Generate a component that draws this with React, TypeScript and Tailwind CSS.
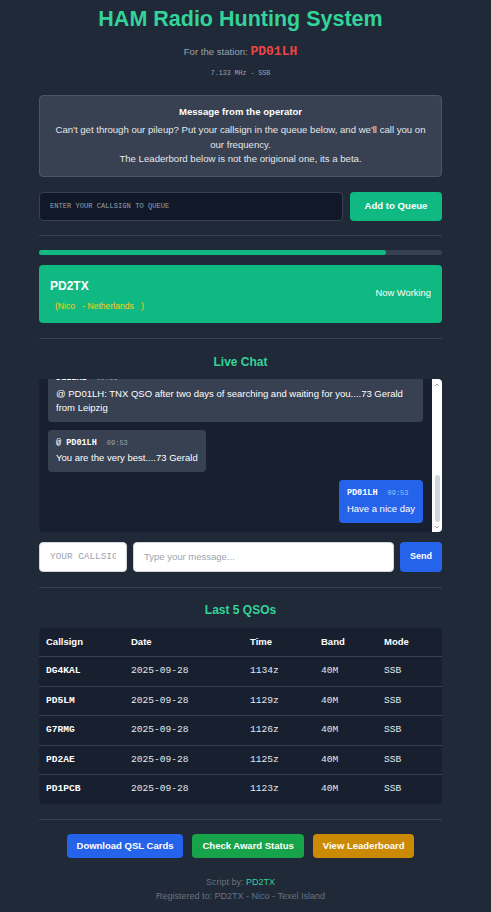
import React, { useLayoutEffect, useRef } from "react";

const SANS = "[font-family:'Liberation_Sans',Arial,sans-serif]";
const MONO = "[font-family:'Liberation_Mono','DejaVu_Sans_Mono',monospace]";

type Msg = { from: string; time: string; text: string; mine?: boolean };

const messages: Msg[] = [
  { from: "PD2TX", time: "09:42", text: "Good morning all, 40M is open nicely today." },
  { from: "DL1LRL", time: "09:45", text: "Hello from Leipzig, listening on 7.133" },
  { from: "PD01LH", time: "09:47", text: "QRV now, please add your call to the queue." },
  { from: "DL1LRL", time: "09:51", text: "@ PD01LH: TNX QSO after two days of searching and waiting for you....73 Gerald from Leipzig" },
  { from: "@ PD01LH", time: "09:53", text: "You are the very best....73 Gerald" },
  { from: "PD01LH", time: "09:53", text: "Have a nice day", mine: true },
];

const qsos = [
  { call: "DG4KAL", time: "1134z" },
  { call: "PD5LM", time: "1129z" },
  { call: "G7RMG", time: "1126z" },
  { call: "PD2AE", time: "1125z" },
  { call: "PD1PCB", time: "1123z" },
];

function Divider() {
  return <div className="h-px bg-[#374151]" />;
}

export default function App() {
  const chatRef = useRef<HTMLDivElement>(null);
  useLayoutEffect(() => {
    const el = chatRef.current;
    if (el) el.scrollTop = el.scrollHeight;
  }, []);

  return (
    <div className={`min-h-screen bg-[#1f2937] text-white ${SANS}`}>
      <div className="pl-[39px] pr-[49px] pt-[5px] pb-[10px]">
        <h1 className="text-center text-[21.5px] leading-[28px] font-bold text-[#34d399]">
          HAM Radio Hunting System
        </h1>
        <div className="mt-[10px] text-center text-[9.6px] leading-[17px] text-[#9ca3af]">
          For the station:{" "}
          <span className={`${MONO} text-[13px] font-bold text-[#ef4444]`}>PD01LH</span>
        </div>
        <div className={`mt-[9px] text-center ${MONO} text-[6.6px] leading-[10px] text-[#9ca3af]`}>
          7.133 MHz - SSB
        </div>

        <div className="mt-[16px] rounded-[4px] border border-[#4b5563] bg-[#374151] px-[12px] pt-[8px] pb-[9px] text-center">
          <div className="text-[9.6px] leading-[15px] font-bold text-white">Message from the operator</div>
          <p className="mt-[4px] text-[9.6px] leading-[14.5px] text-[#e5e7eb]">
            Can't get through our pileup? Put your callsign in the queue below, and we'll call you on our frequency.
            <br />
            The Leaderbord below is not the origional one, its a beta.
          </p>
        </div>

        <div className="mt-[15px] flex gap-[7px]">
          <input
            className={`h-[29px] flex-1 rounded-[4px] border border-[#374151] bg-[#111827] px-[10px] ${MONO} text-[7.1px] text-white placeholder:text-[#9ca3af] outline-none`}
            placeholder="ENTER YOUR CALLSIGN TO QUEUE"
          />
          <button className="h-[29px] w-[92px] rounded-[4px] bg-[#10b981] text-[9.6px] font-bold text-white">
            Add to Queue
          </button>
        </div>

        <div className="mt-[14px]">
          <Divider />
        </div>

        <div className="mt-[14px] h-[5px] rounded-full bg-[#374151]">
          <div className="h-full rounded-full bg-[#10b981]" style={{ width: "86%" }} />
        </div>

        <div className="mt-[10px] flex h-[58px] items-center justify-between rounded-[4px] bg-[#10b981] px-[11px]">
          <div className="pt-[3px]">
            <div className="text-[12px] leading-[16px] font-bold text-white">PD2TX</div>
            <div className="mt-[6px] pl-[5px] text-[8.6px] leading-[12px] text-[#facc15]">
              (Nico &nbsp; - Netherlands &nbsp; )
            </div>
          </div>
          <div className="text-[9.4px] text-white">Now Working</div>
        </div>

        <div className="mt-[15px]">
          <Divider />
        </div>

        <h2 className="mt-[15px] text-center text-[12px] leading-[16px] font-bold text-[#34d399]">Live Chat</h2>

        <div className="mt-[9px] flex h-[153px] overflow-hidden rounded-[4px] bg-[#182030]">
          <div
            ref={chatRef}
            className="flex-1 overflow-y-auto p-[9px] [scrollbar-width:none] [&::-webkit-scrollbar]:hidden"
          >
            <div className="flex flex-col gap-[8px]">
              {messages.map((m, i) => (
                <div key={i} className={`flex ${m.mine ? "justify-end" : "justify-start"}`}>
                  <div
                    className={`rounded-[4px] px-[8px] pt-[7px] pb-[7px] ${
                      m.mine ? "bg-[#2563eb]" : "bg-[#374151]"
                    }`}
                  >
                    <div className="flex h-[13px] items-center gap-[10px]">
                      <span className={`${MONO} text-[8.5px] font-bold text-white`}>{m.from}</span>
                      <span className={`${MONO} text-[7px] ${m.mine ? "text-[#93c5fd]" : "text-[#9ca3af]"}`}>
                        {m.time}
                      </span>
                    </div>
                    <div className="mt-[1.5px] text-[9.5px] leading-[14px] text-white">{m.text}</div>
                  </div>
                </div>
              ))}
            </div>
          </div>
          <div className="flex w-[10px] flex-col items-center bg-white">
            <svg width="6" height="10" viewBox="0 0 6 10" className="mt-[1px]">
              <path d="M1 6 L3 4 L5 6" fill="none" stroke="#a3a3a3" strokeWidth="1" />
            </svg>
            <div className="flex w-full flex-1 flex-col items-center justify-end">
              <div className="h-[47px] w-[5px] rounded-full bg-[#d3d6da]" />
            </div>
            <svg width="6" height="10" viewBox="0 0 6 10">
              <path d="M1 4 L3 6 L5 4" fill="none" stroke="#a3a3a3" strokeWidth="1" />
            </svg>
          </div>
        </div>

        <div className="mt-[10px] flex gap-[6px]">
          <input
            className={`h-[30px] w-[88px] rounded-[4px] border border-[#d1d5db] bg-white px-[10px] ${MONO} text-[9.4px] text-black placeholder:text-[#9ca3af] outline-none`}
            placeholder="YOUR CALLSIGN"
          />
          <input
            className="h-[30px] flex-1 rounded-[4px] border border-[#d1d5db] bg-white px-[10px] text-[9.5px] text-black placeholder:text-[#9ca3af] outline-none"
            placeholder="Type your message..."
          />
          <button className="h-[30px] w-[42px] rounded-[4px] bg-[#2563eb] text-[9px] font-bold text-white">Send</button>
        </div>

        <div className="mt-[15px]">
          <Divider />
        </div>

        <h2 className="mt-[14px] text-center text-[12px] leading-[16px] font-bold text-[#34d399]">Last 5 QSOs</h2>

        <div className="mt-[10px] overflow-hidden rounded-[4px] bg-[#182030]">
          <table className="w-full table-fixed border-collapse">
            <colgroup>
              <col className="w-[85px]" />
              <col className="w-[119px]" />
              <col className="w-[71px]" />
              <col className="w-[63px]" />
              <col />
            </colgroup>
            <thead>
              <tr className="h-[29px] text-left text-[9.5px] font-bold text-white">
                <th className="px-[7px]">Callsign</th>
                <th className="px-[7px]">Date</th>
                <th className="px-[7px]">Time</th>
                <th className="px-[7px]">Band</th>
                <th className="px-[7px]">Mode</th>
              </tr>
            </thead>
            <tbody className={`${MONO} text-[9.6px]`}>
              {qsos.map((q) => (
                <tr key={q.call} className="h-[29.5px] border-t border-[#374151] text-[#e5e7eb]">
                  <td className="px-[7px] font-bold text-white">{q.call}</td>
                  <td className="px-[7px]">2025-09-28</td>
                  <td className="px-[7px]">{q.time}</td>
                  <td className="px-[7px]">40M</td>
                  <td className="px-[7px]">SSB</td>
                </tr>
              ))}
            </tbody>
          </table>
        </div>

        <div className="mt-[15px]">
          <Divider />
        </div>

        <div className="mt-[14px] flex justify-center gap-[9px]">
          <button className="h-[24px] rounded-[4px] bg-[#2563eb] px-[10px] text-[9.5px] font-bold text-white">
            Download QSL Cards
          </button>
          <button className="h-[24px] rounded-[4px] bg-[#16a34a] px-[10px] text-[9.5px] font-bold text-white">
            Check Award Status
          </button>
          <button className="h-[24px] rounded-[4px] bg-[#ca8a04] px-[10px] text-[9.5px] font-bold text-white">
            View Leaderboard
          </button>
        </div>

        <div className="mt-[18px] text-center text-[9px] leading-[13.5px] text-[#6b7280]">
          <div>
            Script by: <span className="text-[#34d399]">PD2TX</span>
          </div>
          <div>Registered to: PD2TX - Nico - Texel Island</div>
        </div>
      </div>
    </div>
  );
}
